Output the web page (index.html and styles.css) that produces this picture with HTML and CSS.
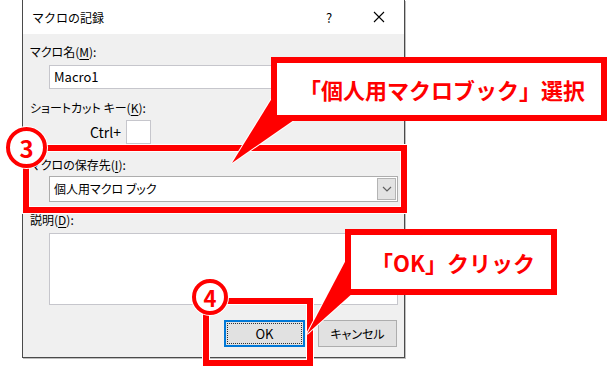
FILE: index.html
```html
<!DOCTYPE html>
<html lang="ja">
<head>
  <meta charset="UTF-8" />
  <title>マクロの記録</title>
  <link rel="stylesheet" href="styles.css">
</head>
<body>

  <div class="canvas">

    <div class="dialog">
      <div class="titlebar">
        <span class="title">マクロの記録</span>
        <span class="tbtn help">?</span>
        <span class="tbtn close">
          <svg width="12" height="12" viewBox="0 0 12 12"><path d="M1 1 L11 11 M11 1 L1 11" stroke="#000" stroke-width="1.1" fill="none"/></svg>
        </span>
      </div>

      <div class="dlg-body">
        <div class="label">マクロ名(<u>M</u>):</div>
        <div class="field text">Macro1</div>

        <div class="label label-key">ショートカット キー(<u>K</u>):</div>
        <div class="shortcut">
          <span>Ctrl+</span>
          <span class="keybox"></span>
        </div>

        <div class="label label-store">マクロの保存先(<u>I</u>):</div>
        <div class="field combo">
          <span class="combo-text">個人用マクロ ブック</span>
          <span class="drop">
            <svg width="10" height="6" viewBox="0 0 10 6"><path d="M1 1 L5 5 L9 1" stroke="#606060" stroke-width="1.2" fill="none"/></svg>
          </span>
        </div>

        <div class="label label-desc">説明(<u>D</u>):</div>
        <div class="field memo"></div>

        <div class="buttons">
          <button class="btn btn-ok"><span class="focus">OK</span></button>
          <button class="btn btn-cancel">キャンセル</button>
        </div>
      </div>
    </div>

    <!-- annotations -->
    <div class="hl hl-3"></div>
    <div class="hl hl-4"></div>
    <div class="num num-3">3</div>
    <div class="num num-4">4</div>

    <svg class="tails" width="612" height="372" viewBox="0 0 612 372">
      <polygon points="274,95 232,163 294,120" />
      <polygon points="347,258 307,334 354,292" />
    </svg>

    <div class="callout callout-1">「個人用マクロブック」選択</div>
    <div class="callout callout-2">「OK」クリック</div>

  </div>

</body>
</html>
```

FILE: styles.css
```css
* {
  box-sizing: border-box;
  margin: 0;
  padding: 0;
}

body {
  background: #ffffff;
  font-family: "Noto Sans CJK JP", "Noto Sans", sans-serif;
  color: #000;
}

.canvas {
  position: relative;
  width: 612px;
  height: 372px;
  overflow: hidden;
}

/* dialog window */

.dialog {
  margin-left: 22px;
  width: 383px;
  height: 358px;
  border: 1px solid #4a4a4a;
  border-top: none;
  background: #f0f0f0;
  display: flex;
  flex-direction: column;
  box-shadow: 1px 1px 0 rgba(0,0,0,0.25);
}

.titlebar {
  height: 34px;
  background: #ffffff;
  display: flex;
  align-items: center;
}

.title {
  flex: 1;
  padding-left: 9px;
  font-size: 12px;
}

.tbtn {
  width: 46px;
  height: 34px;
  display: flex;
  align-items: center;
  justify-content: center;
  font-size: 13px;
}

.help {
  margin-right: 4px;
}

.close {
  margin-right: 2px;
}

.dlg-body {
  flex: 1;
  padding: 10px 6px 0 7px;
}

.label {
  font-size: 12px;
  line-height: 16px;
  font-feature-settings: "palt";
}

.label u {
  text-underline-offset: 2px;
}

.label-key {
  margin-top: 11px;
}

.label-store {
  margin-top: 13px;
}

.label-desc {
  margin-top: 10px;
}

.field {
  margin-left: 19px;
  background: #ffffff;
  border: 1px solid #c6c6cc;
}

.text {
  margin-top: 5px;
  height: 24px;
  padding: 0 4px;
  font-size: 13px;
  line-height: 22px;
}

.shortcut {
  margin-top: 4px;
  height: 24px;
  padding-left: 60px;
  display: flex;
  align-items: center;
  gap: 5px;
  font-size: 14px;
}

.keybox {
  width: 25px;
  height: 24px;
  background: #ffffff;
  border: 1px solid #c6c6cc;
}

.combo {
  margin-top: 3px;
  height: 26px;
  display: flex;
  border-color: #adadad;
}

.combo-text {
  flex: 1;
  padding-left: 4px;
  font-size: 12px;
  line-height: 24px;
  font-feature-settings: "palt";
}

.drop {
  width: 19px;
  margin: 1px;
  background: #e3e3e3;
  border: 1px solid #b4b4b4;
  display: flex;
  align-items: center;
  justify-content: center;
}

.memo {
  margin-top: 5px;
  height: 72px;
}

.buttons {
  margin-top: 15px;
  padding-right: 1px;
  display: flex;
  justify-content: flex-end;
  gap: 13px;
}

.btn {
  height: 27px;
  background: #e1e1e1;
  border: 1px solid #adadad;
  font-family: inherit;
  font-size: 12px;
  color: #000;
  font-feature-settings: "palt";
}

.btn-ok {
  width: 81px;
  border: 2px solid #0078d7;
  padding: 1px;
}

.focus {
  display: flex;
  align-items: center;
  justify-content: center;
  width: 100%;
  height: 100%;
  border: 1px dotted #333;
  font-size: 13px;
}

.btn-cancel {
  width: 79px;
}

/* annotations */

.hl {
  position: absolute;
  border: 6px solid #ff0000;
  box-shadow: 0 0 0 1px #ffffff, inset 0 0 0 1px #ffffff;
}

.hl-3 {
  left: 23px;
  top: 145px;
  width: 384px;
  height: 68px;
}

.hl-4 {
  left: 203px;
  top: 298px;
  width: 110px;
  height: 68px;
}

.num {
  position: absolute;
  border-radius: 50%;
  border: 4px solid #ff0000;
  background: #ffffff;
  color: #ff0000;
  font-weight: 700;
  display: flex;
  align-items: center;
  justify-content: center;
  box-shadow: 0 0 0 1px #ffffff;
}

.num-3 {
  left: 6px;
  top: 127px;
  width: 41px;
  height: 41px;
  font-size: 24px;
}

.num-4 {
  left: 192px;
  top: 279px;
  width: 36px;
  height: 36px;
  font-size: 22px;
}

.tails {
  position: absolute;
  left: 0;
  top: 0;
  pointer-events: none;
}

.tails polygon {
  fill: #ff0000;
  stroke: #ffffff;
  stroke-width: 2;
  paint-order: stroke;
}

.callout {
  position: absolute;
  border: 6px solid #ff0000;
  background: #ffffff;
  color: #ff0000;
  font-weight: 700;
  font-size: 22px;
  display: flex;
  align-items: center;
  justify-content: center;
  white-space: nowrap;
}

.callout-1 {
  left: 271px;
  top: 57px;
  width: 336px;
  height: 64px;
  padding-left: 6px;
}

.callout-2 {
  left: 345px;
  top: 229px;
  width: 212px;
  height: 66px;
  padding-left: 4px;
}
```
